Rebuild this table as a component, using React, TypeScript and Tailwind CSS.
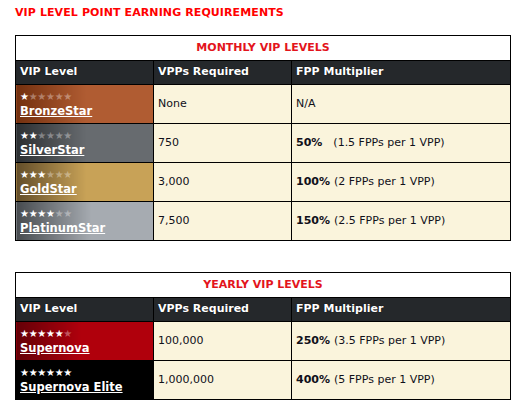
const monthly = [
  { stars: 1, name: "BronzeStar", bg: "bg-[linear-gradient(90deg,#73300f_0px,#b05c32_70px,#b05c32_100%)]", vpp: "None", pct: "", note: "N/A" },
  { stars: 2, name: "SilverStar", bg: "bg-[linear-gradient(90deg,#2c2f32_0px,#676b6f_70px,#676b6f_100%)]", vpp: "750", pct: "50%", note: "\u00a0\u00a0(1.5 FPPs per 1 VPP)" },
  { stars: 3, name: "GoldStar", bg: "bg-[linear-gradient(90deg,#634e2a_0px,#c8a257_70px,#c8a257_100%)]", vpp: "3,000", pct: "100%", note: "(2 FPPs per 1 VPP)" },
  { stars: 4, name: "PlatinumStar", bg: "bg-[linear-gradient(90deg,#474b4f_0px,#a6abb1_75px,#a6abb1_100%)]", vpp: "7,500", pct: "150%", note: "(2.5 FPPs per 1 VPP)" },
];

const yearly = [
  { stars: 5, name: "Supernova", bg: "bg-[linear-gradient(90deg,#640007_0px,#b0000c_65px,#b0000c_100%)]", vpp: "100,000", pct: "250%", note: "(3.5 FPPs per 1 VPP)" },
  { stars: 6, name: "Supernova Elite", bg: "bg-black", vpp: "1,000,000", pct: "400%", note: "(5 FPPs per 1 VPP)" },
];

type Level = (typeof monthly)[number];

function Stars({ count }: { count: number }) {
  return (
    <div className="text-[10px] leading-[13px] tracking-[-0.3px]">
      {[0, 1, 2, 3, 4, 5].map((i) => (
        <span key={i} className={i < count ? "text-white" : "text-white/35"}>
          ★
        </span>
      ))}
    </div>
  );
}

function LevelTable({ title, rows }: { title: string; rows: Level[] }) {
  return (
    <table className="w-[496px] table-fixed border-collapse border border-black text-[11px]">
      <colgroup>
        <col className="w-[138px]" />
        <col className="w-[138px]" />
        <col />
      </colgroup>
      <thead>
        <tr className="h-[25px] bg-white">
          <th colSpan={3} className="border border-black text-center font-bold text-[#e3141c] pt-[1px]">
            {title}
          </th>
        </tr>
        <tr className="h-[24px] bg-[#25282b] text-white">
          <th className="border border-black px-[4px] text-left font-bold [text-shadow:0_0_1px_#000]">VIP Level</th>
          <th className="border border-black px-[4px] text-left font-bold [text-shadow:0_0_1px_#000]">VPPs Required</th>
          <th className="border border-black px-[4px] text-left font-bold [text-shadow:0_0_1px_#000]">FPP Multiplier</th>
        </tr>
      </thead>
      <tbody>
        {rows.map((row) => (
          <tr key={row.name} className="h-[39px]">
            <td className={`border border-black px-[4px] pt-[1px] align-middle ${row.bg}`}>
              <Stars count={row.stars} />
              <a href="#" className="block font-bold text-white underline leading-[16px] text-[11.5px]">
                {row.name}
              </a>
            </td>
            <td className="border border-black bg-[#faf4dc] px-[4px] text-[#10101a]">{row.vpp}</td>
            <td className="border border-black bg-[#faf4dc] px-[4px] text-[#10101a]">
              {row.pct && <b className="mr-[4px]">{row.pct}</b>}
              {row.note}
            </td>
          </tr>
        ))}
      </tbody>
    </table>
  );
}

export default function App() {
  return (
    <div className="w-[527px] h-[410px] bg-white pl-[15px] pt-[5px] font-['DejaVu_Sans',Verdana,sans-serif]">
      <h1 className="text-[11px] tracking-[0.1px] font-bold text-[#ff0000] leading-[16px]">
        VIP LEVEL POINT EARNING REQUIREMENTS
      </h1>
      <div className="mt-[14px]">
        <LevelTable title="MONTHLY VIP LEVELS" rows={monthly} />
      </div>
      <div className="mt-[31px]">
        <LevelTable title="YEARLY VIP LEVELS" rows={yearly} />
      </div>
    </div>
  );
}
